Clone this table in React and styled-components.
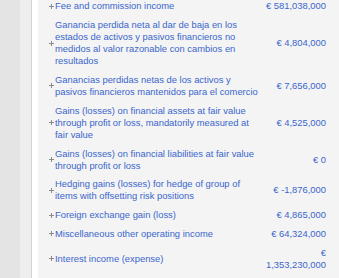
import React from "react";
import styled, { createGlobalStyle } from "styled-components";

const GlobalStyle = createGlobalStyle`
  html, body {
    margin: 0;
    padding: 0;
    height: 100%;
    overflow: hidden;
  }
  body {
    font-family: "Liberation Sans", Arial, sans-serif;
  }
`;

const Page = styled.div`
  display: flex;
  height: 100vh;
`;

const Sidebar = styled.div`
  width: 20px;
  flex: none;
  background-color: #e4e4e4;
`;

const Gutter = styled.div`
  width: 11px;
  flex: none;
  background-color: #eeeeee;
  border-right: 1px solid #d2d2d2;
`;

const Strip = styled.div`
  width: 6px;
  flex: none;
  background-color: #ffffff;
`;

const Main = styled.div`
  flex: 1;
  background-color: #f4f4f4;
  padding: 0 13px 0 11px;
  overflow: hidden;
`;

const List = styled.div`
  display: flex;
  flex-direction: column;
  margin-top: -3px;
`;

const Row = styled.div`
  display: flex;
  align-items: center;
  padding: 3.4px 0;
  font-size: 9.4px;
  line-height: 12px;
  color: #3a66cc;
`;

const Toggle = styled.span`
  width: 6px;
  flex: none;
  display: flex;
  align-items: center;
  justify-content: flex-start;
`;

const Label = styled.div`
  width: 206px;
  flex: none;
`;

const Amount = styled.div`
  width: 65px;
  flex: none;
  margin-left: auto;
  text-align: right;
`;

const Plus = () => (
  <svg width="5" height="5" viewBox="0 0 5 5">
    <path d="M0 2.5H5M2.5 0V5" stroke="#8a8a8a" strokeWidth="1" />
  </svg>
);

const rows = [
  { label: "Fee and commission income", amount: "€ 581,038,000" },
  {
    label:
      "Ganancia perdida neta al dar de baja en los estados de activos y pasivos financieros no medidos al valor razonable con cambios en resultados",
    amount: "€ 4,804,000",
  },
  {
    label:
      "Ganancias perdidas netas de los activos y pasivos financieros mantenidos para el comercio",
    amount: "€ 7,656,000",
  },
  {
    label:
      "Gains (losses) on financial assets at fair value through profit or loss, mandatorily measured at fair value",
    amount: "€ 4,525,000",
  },
  {
    label:
      "Gains (losses) on financial liabilities at fair value through profit or loss",
    amount: "€ 0",
  },
  {
    label:
      "Hedging gains (losses) for hedge of group of items with offsetting risk positions",
    amount: "€ -1,876,000",
  },
  { label: "Foreign exchange gain (loss)", amount: "€ 4,865,000" },
  { label: "Miscellaneous other operating income", amount: "€ 64,324,000" },
  { label: "Interest income (expense)", amount: "€ 1,353,230,000" },
];

export default function App() {
  return (
    <>
      <GlobalStyle />
      <Page>
        <Sidebar />
        <Gutter />
        <Strip />
        <Main>
          <List>
            {rows.map((r) => (
              <Row key={r.label}>
                <Toggle>
                  <Plus />
                </Toggle>
                <Label>{r.label}</Label>
                <Amount>{r.amount}</Amount>
              </Row>
            ))}
          </List>
        </Main>
      </Page>
    </>
  );
}
